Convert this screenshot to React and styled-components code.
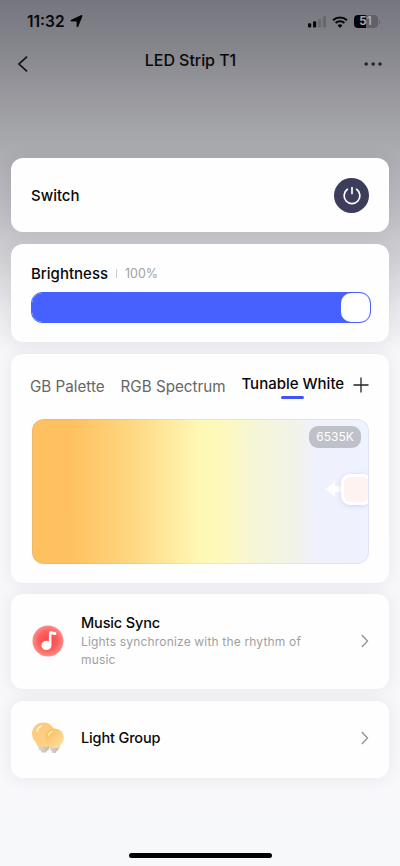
import React, { useState } from 'react';
import styled, { createGlobalStyle, css } from 'styled-components';

const tabs = ['GB Palette', 'RGB Spectrum', 'Tunable White'];

const App = () => {
  const [power, setPower] = useState(true);
  const [activeTab, setActiveTab] = useState('Tunable White');
  const brightness = 100;

  return (
    <>
      <GlobalStyle />
      <Screen>
        <StatusBar>
          <Clock>
            <Time>11:32</Time>
            <LocationIcon />
          </Clock>
          <StatusIcons>
            <SignalIcon />
            <WifiIcon />
            <Battery>
              <BatteryBody>
                <BatteryText>51</BatteryText>
              </BatteryBody>
              <BatteryCap />
            </Battery>
          </StatusIcons>
        </StatusBar>

        <NavBar>
          <NavButton aria-label="Back">
            <svg width="12" height="18" viewBox="0 0 12 18" fill="none">
              <path d="M11 1.6 3 9 11 16.4" stroke="#111116" strokeWidth="1.7" />
            </svg>
          </NavButton>
          <Title>LED Strip T1</Title>
          <NavButton aria-label="More">
            <svg width="20" height="6" viewBox="0 0 20 6" fill="#26262b">
              <circle cx="3.2" cy="3" r="1.8" />
              <circle cx="10.2" cy="3" r="1.8" />
              <circle cx="17" cy="3" r="1.8" />
            </svg>
          </NavButton>
        </NavBar>

        <Content>
          <SwitchCard>
            <Label>Switch</Label>
            <PowerButton $on={power} onClick={() => setPower(!power)} aria-label="Power">
              <svg width="20" height="20" viewBox="0 0 20 20" fill="none" stroke="#fff" strokeWidth="1.7">
                <path d="M10 2v7.2" />
                <path d="M5.4 4.3a7.9 7.9 0 1 0 9.2 0" strokeLinecap="round" />
              </svg>
            </PowerButton>
          </SwitchCard>

          <BrightnessCard>
            <BrightnessHeader>
              <Label>Brightness</Label>
              <Divider />
              <Percent>{brightness}%</Percent>
            </BrightnessHeader>
            <Track>
              <Fill style={{ width: `${brightness}%` }}>
                <Knob />
              </Fill>
            </Track>
          </BrightnessCard>

          <ColorCard>
            <TabRow>
              <Tabs>
                {tabs.map((tab) => (
                  <Tab key={tab} $active={tab === activeTab} onClick={() => setActiveTab(tab)}>
                    {tab}
                  </Tab>
                ))}
              </Tabs>
              <svg width="16" height="16" viewBox="0 0 16 16" stroke="#222" strokeWidth="1.3">
                <path d="M8 .5v15M.5 8h15" />
              </svg>
            </TabRow>
            <WhitePanel>
              <Kelvin>6535K</Kelvin>
              <Arrow width="17" height="16" viewBox="0 0 17 16" fill="#fff">
                <path d="M1 7.2Q0 8 1 8.8L9 14.7Q10 15.3 10 14V11H17V5H10V2Q10 .7 9 1.3Z" />
              </Arrow>
              <Handle />
            </WhitePanel>
          </ColorCard>

          <LinkCard $height={95}>
            <MusicIcon />
            <LinkText>
              <LinkTitle>Music Sync</LinkTitle>
              <LinkInfo>Lights synchronize with the rhythm of music</LinkInfo>
            </LinkText>
            <Chevron />
          </LinkCard>

          <LinkCard $height={77.5}>
            <BulbsIcon />
            <LinkText>
              <LinkTitle>Light Group</LinkTitle>
            </LinkText>
            <Chevron />
          </LinkCard>
        </Content>

        <HomeIndicator />
      </Screen>
    </>
  );
};

export default App;

const LocationIcon = () => (
  <svg width="13" height="13" viewBox="0 0 13 13">
    <path
      d="M12 1 7.8 11.6q-.4.9-.7 0V6.9q0-.9-.9-.9H1.2q-.9-.2-.1-.7L11.2.6q1.100-.4.8.4Z"
      fill="#060608"
      stroke="#060608"
      strokeWidth="0.9"
      strokeLinejoin="round"
    />
  </svg>
);

const SignalIcon = () => (
  <svg width="18" height="12" viewBox="0 0 18 12">
    <rect x="0" y="7.2" width="3.2" height="4.3" rx="1" fill="#060608" />
    <rect x="5" y="5.2" width="3.2" height="6.3" rx="1" fill="#060608" />
    <rect x="9.9" y="2.9" width="3.2" height="8.6" rx="1" fill="#67676d" />
    <rect x="14.8" y="0.2" width="3.2" height="11.3" rx="1" fill="#67676d" />
  </svg>
);

const WifiIcon = () => (
  <svg width="16" height="12" viewBox="0 0 16 12" fill="none" stroke="#060608" strokeWidth="2.1">
    <path d="M1 4.3a10.2 10.2 0 0 1 14 0" />
    <path d="M3.6 7.1a6.3 6.3 0 0 1 8.8 0" />
    <path d="M8 11.9 5.6 9.4a3.5 3.5 0 0 1 4.8 0Z" fill="#060608" stroke="none" />
  </svg>
);

const Chevron = () => (
  <svg width="8" height="14" viewBox="0 0 8 14" fill="none">
    <path d="M.8 1 6.5 7 .8 13" stroke="#909090" strokeWidth="1.3" />
  </svg>
);

const MusicIcon = () => (
  <svg width="32" height="32" viewBox="0 0 32 32">
    <defs>
      <radialGradient id="music">
        <stop offset="0" stopColor="#ff4444" />
        <stop offset="0.6" stopColor="#fd5d5b" />
        <stop offset="1" stopColor="#fc8d89" />
      </radialGradient>
    </defs>
    <circle cx="16" cy="16" r="15.5" fill="url(#music)" />
    <ellipse cx="14.4" cy="20.4" rx="5" ry="4.7" fill="#fff" />
    <path
      d="M16.9 20.5V8.2q0-2.2 2.2-1.9l4.1.8q1.4.4 1.2 1.7-.2 1.6-1.8 1.2l-2.3-.6q-.9-.2-.9.8v10.3Z"
      fill="#fff"
    />
  </svg>
);

const BulbsIcon = () => (
  <svg width="32" height="32" viewBox="0 0 32 32">
    <defs>
      <linearGradient id="bulb" x1="0" y1="0" x2="0.7" y2="1">
        <stop offset="0" stopColor="#fbc878" />
        <stop offset="1" stopColor="#fed388" />
      </linearGradient>
      <linearGradient id="bulbFront" x1="0" y1="0" x2="0.8" y2="1">
        <stop offset="0" stopColor="#fbb958" />
        <stop offset="1" stopColor="#ffdf9f" />
      </linearGradient>
      <linearGradient id="socket">
        <stop offset="0" stopColor="#dedbd4" />
        <stop offset="1" stopColor="#bcb8af" />
      </linearGradient>
    </defs>
    <path d="M5.5 23.5h13l-2.3 5H15l-.8 2H9.600l-.8-2H7.500Z" fill="url(#socket)" />
    <path
      d="M0 12C0 5.3 5 .5 11.500.5S23 5.300 23 12c0 5.600-3.400 7.800-4.500 12q-6.500 1.800-13 0C4.400 19.800 0 17.600 0 12Z"
      fill="url(#bulb)"
    />
    <path d="M5 9q1-3.600 4.600-5.100" stroke="#fff3d9" strokeWidth="1.4" strokeLinecap="round" fill="none" />
    <path d="M17 25h10.500l-2 4h-1l-.7 1.900h-3.400l-.7-1.900h-.9Z" fill="url(#socket)" />
    <path
      d="M13 15.700c0-5.400 4.100-9.200 9.400-9.200s9.300 3.800 9.300 9.200c0 4.700-3.100 6.200-4.200 9.700q-5.200 1.300-10.400 0c-1-3.500-4.100-5-4.100-9.700Z"
      fill="url(#bulbFront)"
    />
    <path d="M16.500 13q.9-2.600 3.500-3.700" stroke="#fff0cf" strokeWidth="1.300" strokeLinecap="round" fill="none" />
  </svg>
);

const GlobalStyle = createGlobalStyle`
  * {
    box-sizing: border-box;
  }

  body {
    margin: 0;
    font-family: Inter, 'Liberation Sans', sans-serif;
    color: #08080a;
  }

  button {
    padding: 0;
    border: none;
    background: none;
    font: inherit;
    color: inherit;
    cursor: pointer;
  }

  svg {
    display: block;
    flex-shrink: 0;
  }
`;

const Screen = styled.div`
  display: flex;
  flex-direction: column;
  width: 400px;
  height: 866px;
  overflow: hidden;
  background: linear-gradient(
    #76767f 0,
    #84848b 45px,
    #96969c 90px,
    #a9aaae 145px,
    #bbbbc0 205px,
    #cdcdd1 250px,
    #e9e9ed 310px,
    #f7f7f9 355px,
    #f7f8fa 866px
  );
`;

const StatusBar = styled.div`
  display: flex;
  justify-content: space-between;
  align-items: center;
  height: 43px;
  padding: 0 20px 0 27px;
`;

const Clock = styled.div`
  display: flex;
  align-items: center;
  gap: 5px;
`;

const Time = styled.span`
  font-size: 15.5px;
  font-weight: 600;
  line-height: 20px;
  padding-top: 1px;
`;

const StatusIcons = styled.div`
  display: flex;
  align-items: center;
  gap: 6px;
`;

const Battery = styled.div`
  display: flex;
  align-items: center;
  gap: 1px;
`;

const BatteryBody = styled.div`
  display: flex;
  align-items: center;
  justify-content: center;
  width: 24px;
  height: 13px;
  border-radius: 4px;
  background: linear-gradient(90deg, #060608 51%, #606066 51%);
`;

const BatteryText = styled.span`
  font-size: 11.5px;
  font-weight: 700;
  line-height: 13px;
  color: #a8a8af;
`;

const BatteryCap = styled.div`
  width: 1.5px;
  height: 4px;
  border-radius: 0 2px 2px 0;
  background: #606066;
`;

const NavBar = styled.div`
  display: flex;
  align-items: center;
  height: 41px;
  padding: 0 17px 0 16px;
`;

const NavButton = styled.button`
  display: flex;
`;

const Title = styled.h1`
  flex: 1;
  margin: 0 10px 8px 0;
  font-size: 16px;
  font-weight: 500;
  line-height: 20px;
  letter-spacing: -0.05px;
  text-align: center;
`;

const Content = styled.main`
  display: flex;
  flex-direction: column;
  flex: 1;
  gap: 11.5px;
  padding: 74px 11px 0;
`;

const card = css`
  flex-shrink: 0;
  border-radius: 12px;
  background: #fefefe;
  box-shadow: 0 0 16px rgba(50, 35, 90, 0.08);
`;

const SwitchCard = styled.section`
  ${card}
  display: flex;
  justify-content: space-between;
  align-items: center;
  height: 74px;
  padding: 0 20px;
`;

const Label = styled.span`
  font-size: 15px;
  font-weight: 500;
`;

const PowerButton = styled.button`
  display: flex;
  align-items: center;
  justify-content: center;
  width: 35px;
  height: 35px;
  border-radius: 50%;
  background: ${(props) => (props.$on ? '#3c3c5b' : '#b4b4c0')};
`;

const BrightnessCard = styled.section`
  ${card}
  height: 98.5px;
  padding: 19.5px 18px 0 20px;
`;

const BrightnessHeader = styled.div`
  display: flex;
  align-items: center;
  height: 20px;
`;

const Divider = styled.div`
  width: 1px;
  height: 9px;
  margin: 0 8px;
  background: #cfcfcf;
`;

const Percent = styled.span`
  font-size: 12.4px;
  color: #a0a0a0;
`;

const Track = styled.div`
  height: 31px;
  margin-top: 9px;
  border: 1px solid #4661ff;
  border-radius: 11px;
  overflow: hidden;
`;

const Fill = styled.div`
  display: flex;
  justify-content: flex-end;
  height: 100%;
  background: #4661ff;
`;

const Knob = styled.div`
  width: 29px;
  height: 29px;
  border-radius: 10px;
  background: #fff;
`;

const ColorCard = styled.section`
  ${card}
  height: 229px;
  padding: 19.5px 20px 0 20.5px;
`;

const TabRow = styled.div`
  display: flex;
  justify-content: space-between;
  align-items: center;
  height: 24px;
`;

const Tabs = styled.div`
  display: flex;
  gap: 16px;
  margin-left: -1.5px;
`;

const Tab = styled.button`
  margin-top: 4px;
  font-size: 15.2px;
  line-height: 20px;
  white-space: nowrap;
  color: #666;

  ${(props) =>
    props.$active &&
    css`
      display: flex;
      flex-direction: column;
      align-items: center;
      height: 20px;
      margin-top: 1px;
      font-size: 15px;
      font-weight: 500;
      color: #08080a;

      &::after {
        content: '';
        flex-shrink: 0;
        width: 23px;
        height: 3px;
        margin-top: 2px;
        border-radius: 2px;
        background: #3f56f5;
      }
    `}
`;

const WhitePanel = styled.div`
  position: relative;
  height: 145px;
  margin-top: 22px;
  border: 1px solid rgba(100, 110, 190, 0.1);
  border-radius: 12px;
  overflow: hidden;
  background: linear-gradient(
      90deg,
      #ffc05f 0,
      #ffc05f 11%,
      #fed57e 28%,
      #fef8b5 50%,
      #fef9b9 55%,
      #f6f6d6 66%,
      #f2f3e8 78%,
      #eff1fb 84%,
      #eff2ff 100%
    )
    border-box;
`;

const Kelvin = styled.div`
  position: absolute;
  top: 6px;
  right: 7px;
  width: 52px;
  height: 22px;
  border-radius: 9px;
  background: #bfc1c9;
  color: #fff;
  font-size: 12px;
  line-height: 22px;
  text-align: center;
`;

const Arrow = styled.svg`
  position: absolute;
  top: 61px;
  right: 26px;
  opacity: 0.9;
`;

const Handle = styled.div`
  position: absolute;
  top: 53.5px;
  right: -4px;
  width: 31px;
  height: 31px;
  border: 3px solid #fff;
  border-radius: 9px;
  background: #fff3f1;
  box-shadow: 0 1px 5px rgba(60, 60, 110, 0.16);
`;

const LinkCard = styled.section`
  ${card}
  display: flex;
  align-items: center;
  gap: 17px;
  height: ${(props) => props.$height}px;
  padding: 0 20.5px 2px 21px;
`;

const LinkText = styled.div`
  flex: 1;
`;

const LinkTitle = styled.div`
  font-size: 14.5px;
  font-weight: 500;
  line-height: 20px;
  letter-spacing: -0.15px;
`;

const LinkInfo = styled.div`
  max-width: 240px;
  font-size: 12px;
  line-height: 17.5px;
  letter-spacing: 0.17px;
  color: #a0a0a0;
`;

const HomeIndicator = styled.div`
  flex-shrink: 0;
  align-self: center;
  width: 143px;
  height: 5px;
  margin-bottom: 8px;
  border-radius: 3px;
  background: #000;
`;
